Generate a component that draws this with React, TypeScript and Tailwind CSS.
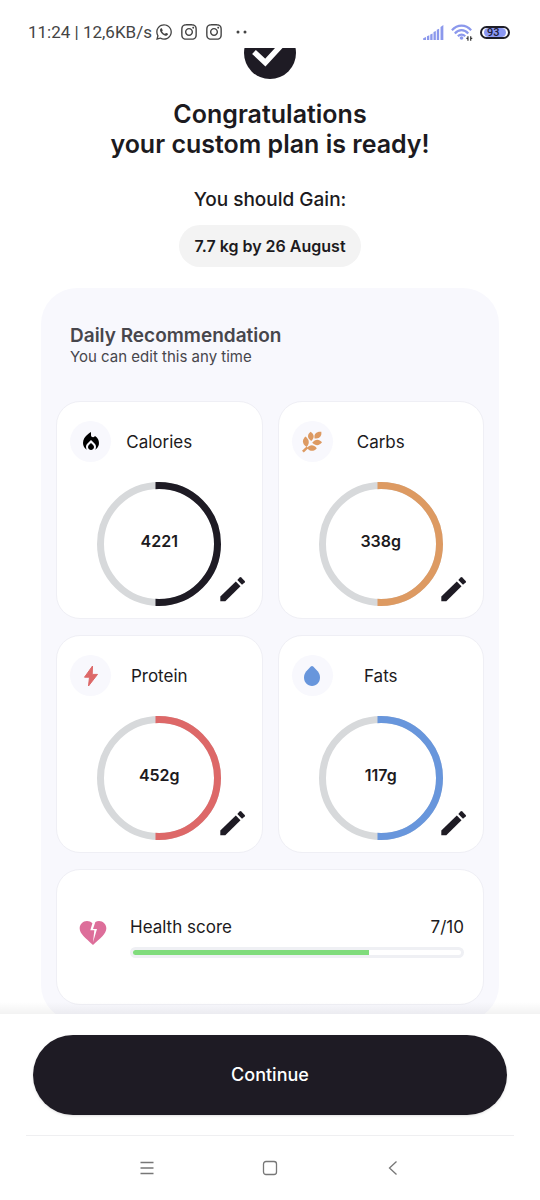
import React from "react";
import { FaWhatsapp, FaInstagram } from "react-icons/fa";
import { MdLocalFireDepartment, MdHeartBroken } from "react-icons/md";

function StatusBar() {
  return (
    <header className="flex h-12 shrink-0 items-center justify-between pt-4 pr-[30px] pl-7 text-[#444]">
      <div className="flex items-center gap-[7px]">
        <span className="-mr-1 font-[Roboto,sans-serif] text-[17px] leading-5 whitespace-nowrap">
          11:24 | 12,6KB/s
        </span>
        <FaWhatsapp className="size-[18px]" />
        <FaInstagram className="size-[18px]" />
        <FaInstagram className="size-[18px]" />
        <svg viewBox="0 0 12 4" className="ml-[6px] h-1 w-3" fill="#444">
          <circle cx="2" cy="2" r="1.5" />
          <circle cx="9" cy="2" r="1.5" />
        </svg>
      </div>
      <div className="flex items-center gap-[7px]">
        <svg viewBox="0 0 22 16" className="h-[15px] w-[21px]" fill="#8b98ec">
          <path d="M0 16v-2l3-1.2V16zM4 16v-4l2.500-1V16zM7.500 16v-6L10 9v7zM11 16V7.500l2.500-1V16zM14.500 16V5L17 4v12zM18.500 16V2L21.500 0v16z" />
        </svg>
        <svg viewBox="0 0 24 18" className="h-[17px] w-[22px]" fill="none" stroke="#8b98ec" strokeWidth="2.400">
          <path d="M1 6.500C7-.2 16-.2 22 6.500M4.200 10c4.200-4.700 10.400-4.700 14.600 0M7.500 13.200c2.400-2.500 5.600-2.500 8 0" />
          <circle cx="11.500" cy="15" r="2" fill="#8b98ec" stroke="none" />
          <path d="M18.500 13V18M21.500 13v5M16.800 15.500h1.700M21.500 15.500h1.700" stroke="#333" strokeWidth="1.300" />
        </svg>
        <div className="flex h-[13px] w-[30px] items-center rounded-full border-2 border-[#1e1e28] px-[2px]">
          <span className="flex h-[9px] w-full items-center rounded-full bg-[#8b98f4] pl-[3px] font-[Roboto,sans-serif] text-[11px] leading-[9px] font-medium text-[#1e1e3c]">
            93
          </span>
        </div>
      </div>
    </header>
  );
}

function CheckBadge() {
  return (
    <svg viewBox="0 21 52 31" className="h-[31px] w-[52px]" aria-hidden="true">
      <circle cx="26" cy="26" r="26" fill="#1e1b24" />
      <path d="M10 25L21.300 35.500L38 17.500" fill="none" stroke="#fff" strokeWidth="5.500" />
    </svg>
  );
}

function WheatIcon() {
  return (
    <svg viewBox="0 0 20 22" className="h-[22px] w-5" fill="#dd9a62" aria-hidden="true">
      <path d="M19.300 .8C14.500 .4 11.600 3 12.600 7.400C17.500 8.200 20 5 19.300 .8Z" />
      <path d="M8.600 .8C4.900 3.800 5.200 7.400 9.200 9.900C12.900 6.800 12.300 3.400 8.600 .8Z" />
      <path d="M3.400 5.600C-.3 9 .2 13.300 4.700 16C8 12.200 7.200 8.400 3.400 5.600Z" />
      <path d="M20 11.300C17 7.600 13.300 7.800 10.200 11.700C13.600 15.100 17.300 14.900 20 11.300Z" />
      <path d="M14.800 17.200C11.500 13.400 8 13.500 4.900 17C8.300 20.800 11.800 20.700 14.800 17.200Z" />
      <path d="M0 19.800L4.500 15.500L6.200 17.200L1.800 21.600Z" />
    </svg>
  );
}

function BoltIcon() {
  return (
    <svg viewBox="0 0 16 22" className="h-[22px] w-4" fill="#dd6868" stroke="#dd6868" strokeLinejoin="round" aria-hidden="true">
      <path d="M9.500 1L1.500 12.200H6.500L5.500 21L14.500 9.400H9.200Z" />
    </svg>
  );
}

function DropIcon() {
  return (
    <svg viewBox="0 0 16 20" className="h-5 w-4" fill="#6896dc" aria-hidden="true">
      <path d="M6.800 .6Q8 -.4 9.200 .6L13.700 5.300C15.200 7 16 9.300 16 11.600C16 16.500 12.500 20 8 20S0 16.500 0 11.600C0 9.300 .8 7 2.300 5.300Z" />
    </svg>
  );
}

function Ring({ color, id }: { color: string; id: string }) {
  return (
    <svg viewBox="0 0 124 124" className="size-[124px]" fill="none" strokeWidth="7" aria-hidden="true">
      <clipPath id={id}>
        <rect x="58.500" width="66" height="124" />
      </clipPath>
      <circle cx="62" cy="62" r="58.500" stroke="#d7d9db" />
      <circle cx="62" cy="62" r="58.500" stroke={color} clipPath={`url(#${id})`} />
    </svg>
  );
}

type Nutrient = { name: string; value: string; color: string; icon: React.ReactNode };

const nutrients: Nutrient[] = [
  { name: "Calories", value: "4221", color: "#1e1b24", icon: <MdLocalFireDepartment className="size-6 text-black" /> },
  { name: "Carbs", value: "338g", color: "#dd9a62", icon: <WheatIcon /> },
  { name: "Protein", value: "452g", color: "#dd6868", icon: <BoltIcon /> },
  { name: "Fats", value: "117g", color: "#6896dc", icon: <DropIcon /> },
];

function NutrientCard({ name, value, color, icon }: Nutrient) {
  return (
    <article className="relative flex flex-col items-center rounded-3xl border border-[#efeff5] bg-white px-[13px] pt-[19px] pb-[11px]">
      <div className="grid w-full grid-cols-[41px_1fr_41px] items-center">
        <span className="flex size-[41px] items-center justify-center rounded-full bg-[#f8f8fd]">{icon}</span>
        <h3 className="text-center text-[17px] leading-6">{name}</h3>
      </div>
      <div className="mt-5 mb-px grid place-items-center">
        <div className="col-start-1 row-start-1">
          <Ring color={color} id={`ring-${name}`} />
        </div>
        <span className="col-start-1 row-start-1 pb-[7px] text-base leading-6 font-semibold">{value}</span>
      </div>
      <button type="button" aria-label={`Edit ${name}`} className="absolute right-4 bottom-4 cursor-pointer">
        <svg viewBox="0 0 26 26" className="size-[26px]" fill="#1e1b24">
          <path d="M.3 20.500L15.800 5.500L20.500 10.200L5.300 25.300H.3Z" />
          <path d="M17.300 4L19.600 1.500Q20.400 .700 21.300 1.500L24.700 4.900Q25.500 5.800 24.700 6.600L22 8.700Z" />
        </svg>
      </button>
    </article>
  );
}

function HealthScore() {
  const score = 7;
  return (
    <article className="col-span-2 flex h-[136px] items-center gap-[21px] rounded-3xl border border-[#efeff5] bg-white pr-[19px] pl-5">
      <MdHeartBroken className="mt-[-9px] size-8 shrink-0 text-[#dd6e9a]" />
      <div className="flex-1 pb-[2px]">
        <div className="flex justify-between text-[17px] leading-6">
          <h3>Health score</h3>
          <span>{score}/10</span>
        </div>
        <div
          role="progressbar"
          aria-label="Health score"
          aria-valuenow={score}
          aria-valuemin={0}
          aria-valuemax={10}
          className="mt-2 h-[11px] rounded-full border-[3px] border-[#eff0f4] bg-white"
        >
          <div className="h-full rounded-l-full bg-[#80dc7c]" style={{ width: `${(score + 0.2) * 10}%` }} />
        </div>
      </div>
    </article>
  );
}

export default function App() {
  return (
    <div className="flex h-screen flex-col bg-white font-[Inter,sans-serif] text-[#1c1a20]">
      <StatusBar />
      <main className="flex-1 overflow-y-auto [scrollbar-width:none]">
        <div className="flex flex-col items-center">
          <CheckBadge />
          <h1 className="mt-5 text-center text-[25px] leading-[30px] font-semibold">
            Congratulations
            <br />
            your custom plan is ready!
          </h1>
          <p className="mt-[29px] text-[19px] leading-6 font-medium">You should Gain:</p>
          <p className="mt-[13px] rounded-full bg-[#f3f3f3] px-[15px] py-[9px] text-base leading-6 font-semibold">
            7.7 kg by 26 August
          </p>
        </div>
        <section className="mx-[41px] mt-[21px] rounded-[36px] bg-[#f8f8fd] px-[15px] pt-9 pb-4">
          <div className="px-[14px] text-[#47464c]">
            <h2 className="text-[19px] leading-6 font-semibold">Daily Recommendation</h2>
            <p className="text-[15px] leading-[18px]">You can edit this any time</p>
          </div>
          <div className="mt-[35px] grid grid-cols-2 gap-x-[15px] gap-y-4">
            {nutrients.map((n) => (
              <NutrientCard key={n.name} {...n} />
            ))}
            <HealthScore />
          </div>
        </section>
      </main>
      <footer className="relative shrink-0">
        <div className="pointer-events-none absolute inset-x-0 bottom-full h-3 bg-linear-to-t from-black/5 to-transparent" />
        <div className="px-[33px] pt-[21px]">
          <button
            type="button"
            className="h-20 w-full cursor-pointer rounded-full bg-[#1e1b24] text-lg font-medium text-white shadow-sm"
          >
            Continue
          </button>
        </div>
        <div className="mx-[26px] mt-5 border-t border-[#efeff1]" />
        <nav className="flex h-16 items-center justify-center gap-[107px] text-[#777]">
          <button type="button" aria-label="Recent apps">
            <svg viewBox="0 0 16 16" className="size-4" fill="none" stroke="currentColor" strokeWidth="1.300">
              <path d="M1.500 2.500H14.500M1.500 8H14.500M1.500 13.500H14.500" />
            </svg>
          </button>
          <button type="button" aria-label="Home">
            <svg viewBox="0 0 16 16" className="size-4" fill="none" stroke="currentColor" strokeWidth="1.300">
              <rect x="1.500" y="1.500" width="13" height="13" rx="2.500" />
            </svg>
          </button>
          <button type="button" aria-label="Back">
            <svg viewBox="0 0 16 16" className="size-4" fill="none" stroke="currentColor" strokeWidth="1.300">
              <path d="M11.500 1.500L4.500 8L11.500 14.500" />
            </svg>
          </button>
        </nav>
      </footer>
    </div>
  );
}
